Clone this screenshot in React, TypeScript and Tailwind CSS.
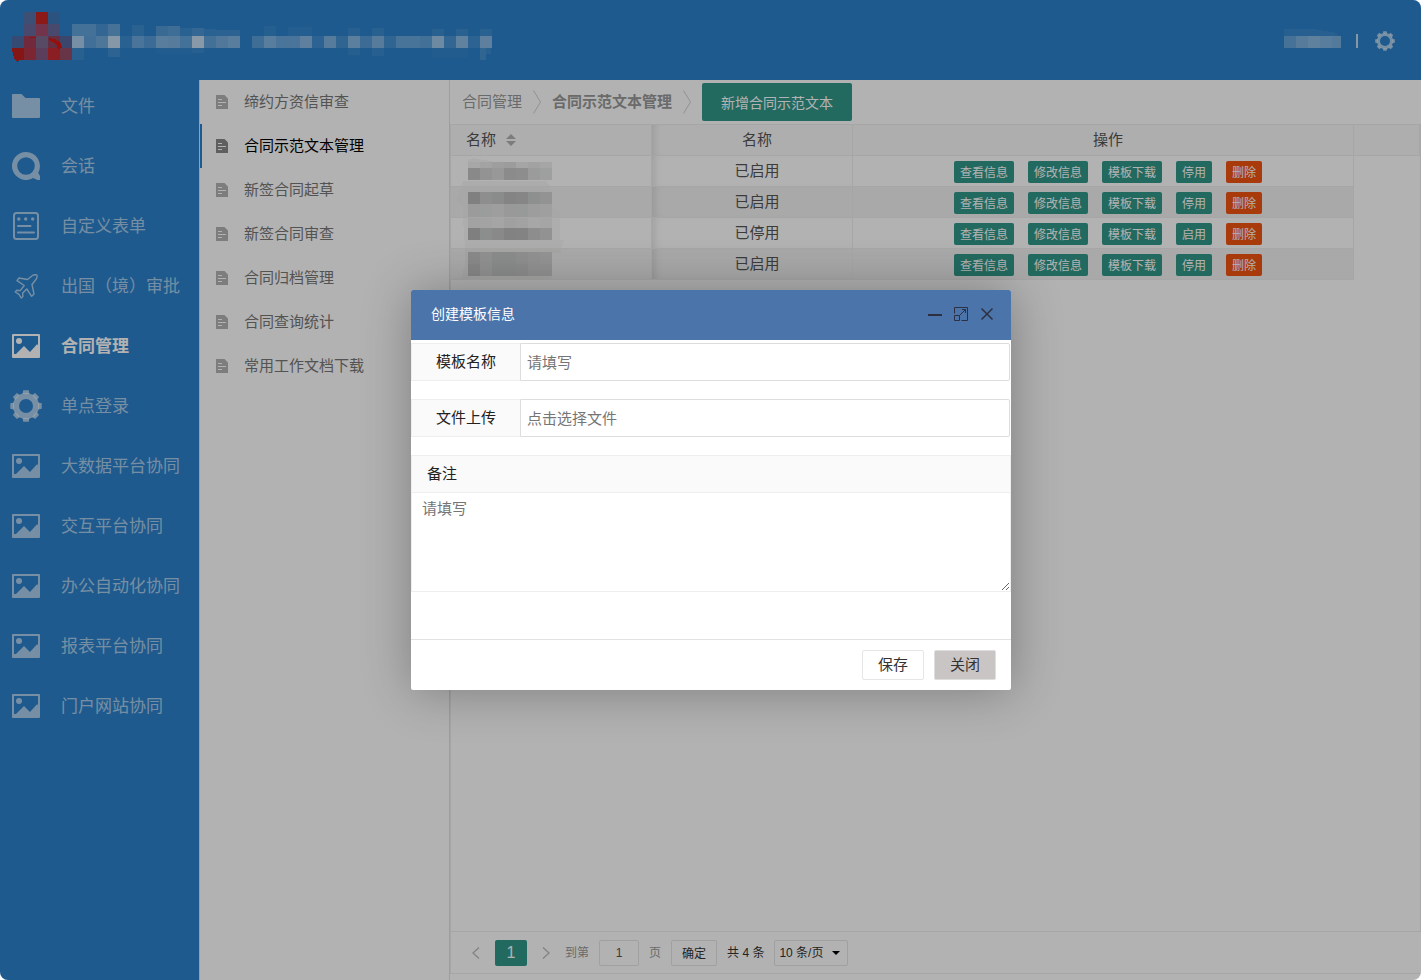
import React, { useState } from 'react'

type IconName = 'folder' | 'chat' | 'form' | 'plane' | 'image' | 'gear'

const NAV: { icon: IconName; label: string }[] = [
  { icon: 'folder', label: '文件' },
  { icon: 'chat', label: '会话' },
  { icon: 'form', label: '自定义表单' },
  { icon: 'plane', label: '出国（境）审批' },
  { icon: 'image', label: '合同管理' },
  { icon: 'gear', label: '单点登录' },
  { icon: 'image', label: '大数据平台协同' },
  { icon: 'image', label: '交互平台协同' },
  { icon: 'image', label: '办公自动化协同' },
  { icon: 'image', label: '报表平台协同' },
  { icon: 'image', label: '门户网站协同' },
]

const SUB_NAV = ['缔约方资信审查', '合同示范文本管理', '新签合同起草', '新签合同审查', '合同归档管理', '合同查询统计', '常用工作文档下载']

const ROWS = [
  { status: '已启用', toggle: '停用' },
  { status: '已启用', toggle: '停用' },
  { status: '已停用', toggle: '启用' },
  { status: '已启用', toggle: '停用' },
]

// Masked names: [y, height, shade of each 12px cell]
const MASKS: [number, number, string[]][][] = [
  [
    [6, 6, ['#efefef', '#eaeaea', '#e2e2e2', '#e0e0e0', '#ececec', '#e8e8e8', '#eeeeee']],
    [12, 12, ['#c4c4c4', '#d3d3d3', '#dadada', '#c8c8c8', '#cbcbcb', '#dedede', '#e3e5e4']],
  ],
  [
    [5, 12, ['#b8b8b8', '#cccccc', '#c6c8c7', '#bdbdbd', '#c0c0c0', '#cccecf', '#d3d3d3']],
    [17, 13, ['#dfdfdf', '#dde1df', '#e3e3e3', '#dcdcdc', '#dadcdb', '#e1e1e1', '#e4e4e4']],
  ],
  [
    [0, 10, ['#e9e9e9', '#eaeaea', '#ececec', '#e6e6e6', '#e9e9e9', '#efefef', '#ededed']],
    [10, 12, ['#b6b6b6', '#c9cbca', '#c4c4c4', '#bababa', '#bcbcbc', '#cbcbcb', '#d2d2d2']],
  ],
  [
    [3, 12, ['#c6c6c6', '#d0d0d0', '#c8cac9', '#c6cac8', '#cdcdcd', '#d2d2d2', '#d4d4d4']],
    [15, 12, ['#c2c2c2', '#d0d0d0', '#c6c8c7', '#c6c8c7', '#c9c9c9', '#d0d0d0', '#d0d0d0']],
  ],
]

// Light smudge around each masked name
const SMUDGES = [
  { d: 'M17 4L22 2l22 4 40 2v10H17zM12 25h82l6 5H10z', fill: '#f6f6f6' },
  { d: 'M10 0h88l3 5h-8v13l16 6v6H12V20l-7-6z', fill: '#f1f0ef' },
  { d: 'M12 0h97v22h4l-3 8H14z', fill: '#f8f8f8' },
  { d: 'M14 0h96v4h-12l2 26H10l4-14z', fill: '#ececeb' },
]

// [x, y, width, height, opacity] of the masked title in the header
const TITLE_CELLS: number[][] = [
  [72, 24, 24, 12, 0.26], [96, 24, 12, 12, 0.14], [108, 24, 12, 12, 0.28], [132, 25, 12, 11, 0.08],
  [156, 26, 12, 10, 0.18], [168, 26, 12, 10, 0.22], [180, 28, 12, 8, 0.08], [192, 28, 12, 8, 0.15],
  [204, 29, 12, 7, 0.08], [216, 30, 24, 6, 0.09],
  [72, 36, 12, 12, 0.6], [84, 36, 12, 12, 0.24], [96, 36, 12, 12, 0.32], [108, 36, 12, 12, 0.7],
  [120, 36, 12, 12, 0.08], [132, 36, 12, 12, 0.3], [144, 36, 12, 12, 0.2], [156, 36, 12, 12, 0.4],
  [168, 36, 12, 12, 0.38], [180, 36, 12, 12, 0.26], [192, 36, 12, 12, 0.72], [204, 36, 12, 12, 0.25],
  [216, 36, 12, 12, 0.34], [228, 36, 12, 12, 0.4], [252, 36, 12, 12, 0.22], [264, 36, 12, 12, 0.4],
  [276, 36, 24, 12, 0.3], [300, 36, 12, 12, 0.43], [312, 36, 12, 12, 0.1], [324, 36, 12, 12, 0.38],
  [336, 36, 12, 12, 0.12], [348, 36, 12, 12, 0.42], [360, 36, 12, 12, 0.2], [372, 36, 12, 12, 0.38],
  [384, 36, 12, 12, 0.12], [396, 36, 24, 12, 0.29], [420, 36, 12, 12, 0.25], [432, 36, 12, 12, 0.54],
  [444, 36, 12, 12, 0.14], [456, 36, 12, 12, 0.46], [468, 36, 12, 12, 0.1], [480, 36, 12, 12, 0.43],
  [72, 48, 12, 12, 0.07], [108, 48, 12, 9, 0.1], [156, 48, 36, 6, 0.03], [192, 48, 12, 5, 0.06],
  [264, 26, 12, 10, 0.05], [288, 27, 24, 9, 0.04], [348, 28, 12, 8, 0.06], [372, 28, 12, 8, 0.07],
  [432, 29, 12, 7, 0.07], [456, 29, 12, 7, 0.08], [480, 29, 12, 7, 0.08],
  [348, 48, 12, 7, 0.05], [372, 48, 12, 8, 0.06], [432, 48, 36, 10, 0.03], [480, 48, 6, 12, 0.12], [486, 48, 5, 6, 0.07],
]

const LOGO_CELLS: [number, number, string][] = [
  [24, 12, '#5672a6'], [36, 12, '#c82522'], [48, 12, '#4078b8'],
  [24, 24, '#68699d'], [36, 24, '#a34b6b'], [48, 24, '#68699d'],
  [12, 36, '#4d6ca6'], [24, 36, '#a23c57'], [36, 36, '#7c6a90'], [48, 36, '#92425d'], [60, 36, '#54659a'],
  [24, 48, '#b3374a'], [36, 48, '#835a85'], [48, 48, '#c82c32'], [60, 48, '#954d68'],
]

function Gear({ size, hole, body }: { size: number; hole: number; body: number }) {
  const mid = (hole + body) / 2
  return (
    <svg width={size} height={size} viewBox="0 0 32 32" fill="currentColor" aria-hidden="true">
      <circle cx="16" cy="16" r={mid} fill="none" stroke="currentColor" strokeWidth={body - hole} />
      {[0, 45, 90, 135, 180, 225, 270, 315].map((a) => (
        <path key={a} d={`M12.6 ${17 - body} L13.2 0.3 H18.8 L19.4 ${17 - body} Z`} transform={`rotate(${a} 16 16)`} />
      ))}
    </svg>
  )
}

function NavIcon({ name }: { name: IconName }) {
  if (name === 'gear') return <Gear size={32} hole={7} body={13} />
  return (
    <svg width="28" height="28" viewBox="0 0 28 28" fill="none" stroke="currentColor" aria-hidden="true">
      {name === 'folder' && (
        <path d="M1 2h8.5l4 4H27a1 1 0 0 1 1 1v18a1 1 0 0 1-1 1H1a1 1 0 0 1-1-1V3a1 1 0 0 1 1-1z" fill="currentColor" stroke="none" />
      )}
      {name === 'chat' && (
        <path
          d="M14 0a14 14 0 0 1 12.200 20.800L28 24v4h-2.500l-4.300-2A14 14 0 1 1 14 0zM14 5.200a8.800 8.800 0 1 0 0 17.600 8.800 8.800 0 0 0 0-17.600z"
          fill="currentColor"
          fillRule="evenodd"
          stroke="none"
        />
      )}
      {name === 'form' && (
        <>
          <rect x="2" y="1" width="24" height="26" rx="2.5" strokeWidth="2" />
          <path d="M6 14h12.500M6 20.500h16" strokeWidth="2" strokeLinecap="round" />
          <g fill="currentColor" stroke="none">
            <circle cx="6.800" cy="7" r="1.700" />
            <circle cx="13.700" cy="7" r="1.700" />
            <circle cx="20.700" cy="7" r="1.700" />
          </g>
        </>
      )}
      {name === 'plane' && (
        <path
          d="M15.500 7.500L20.500 3.500c1.400-1 3.900-.9 4.400-.4.500.6.200 2.900-.8 4.200L20 12.500l2 9.500-2.300 2.300-4.900-7.300-4.100 4.100.2 3.300-1.700 1.600L7 22.300 3.200 20l1.600-1.700 3.400.3 4-5.100-7.200-4.900L7 6z"
          strokeWidth="1.400"
          strokeLinejoin="round"
        />
      )}
      {name === 'image' && (
        <>
          <path fillRule="evenodd" stroke="none" fill="currentColor" d="M1 2h26a1 1 0 0 1 1 1v22a1 1 0 0 1-1 1H1a1 1 0 0 1-1-1V3a1 1 0 0 1 1-1zM2 4v18h2L12 14l6 6 7-7.700 1 .7V4z" />
          <circle cx="7" cy="9" r="3" fill="currentColor" stroke="none" />
        </>
      )}
    </svg>
  )
}

function DocIcon() {
  return (
    <svg width="12" height="14" viewBox="0 0 12 14" aria-hidden="true">
      <path d="M0 0h8.500L12 3.500V14H0z" fill="currentColor" />
      <path d="M2 4.500h4M2 7.500h8M2 10.500h4" stroke="#fff" strokeWidth="1" />
    </svg>
  )
}

function CrumbArrow() {
  return (
    <svg width="8" height="24" viewBox="0 0 8 24" fill="none" stroke="#d2d2d2" aria-hidden="true">
      <path d="M.5.5L7.500 12 .5 23.500" />
    </svg>
  )
}

function PageArrow({ next }: { next?: boolean }) {
  return (
    <svg width="8" height="12" viewBox="0 0 8 12" fill="none" stroke="currentColor" strokeWidth="1.300" aria-hidden="true">
      <path d={next ? 'M1 .5L7 6l-6 5.500' : 'M7 .5L1 6l6 5.500'} />
    </svg>
  )
}

function Header() {
  return (
    <header className="flex h-20 items-center justify-between bg-[#2c82cc] pr-[26px]">
      <svg width="500" height="80" viewBox="0 0 500 80" shapeRendering="crispEdges" role="img" aria-label="logo">
        {LOGO_CELLS.map(([x, y, fill]) => <rect key={`${x}-${y}`} x={x} y={y} width="12" height="12" fill={fill} />)}
        <path d="M12 48h12v12h-4l-3 2-3-4-1-5-1-1z" fill="#bd2020" />
        <path d="M49 38l6 1 6 4 1 5-4 1-1-3-4-4-5-3zM30 37h6v1h-6z" fill="#d41812" />
        {TITLE_CELLS.map(([x, y, w, h, o]) => (
          <rect key={`${x}-${y}`} x={x} y={y} width={w} height={h} fill="#fff" fillOpacity={o} />
        ))}
      </svg>
      <div className="flex items-center pt-0.5 text-white">
        <svg width="57" height="26" viewBox="0 0 57 26" fill="#fff" shapeRendering="crispEdges" role="img" aria-label="user">
          <path d="M0 1h29l12 2 12 2 1 3H0z" fillOpacity="0.060" />
          <path d="M0 8h12v12H0z" fillOpacity="0.280" />
          <path d="M12 8h12v12H12z" fillOpacity="0.380" />
          <path d="M24 8h12v12H24z" fillOpacity="0.440" />
          <path d="M36 8h12v12H36z" fillOpacity="0.400" />
          <path d="M48 8h9v12h-9z" fillOpacity="0.360" />
        </svg>
        <span className="mr-[17px] ml-[15px] h-3.5 w-0.5 bg-white/70" />
        <button type="button" aria-label="设置" className="text-white/60">
          <Gear size={20} hole={8} body={13} />
        </button>
      </div>
    </header>
  )
}

function OpButton({ children, danger }: { children: React.ReactNode; danger?: boolean }) {
  return (
    <button type="button" className={`h-[22px] rounded-xs px-1.5 pt-0.5 text-[12px] leading-5 text-white ${danger ? 'bg-[#f35312]' : 'bg-[#319889]'}`}>
      {children}
    </button>
  )
}

function TemplateTable() {
  const th = 'h-[31px] border-r border-b border-[#eee] bg-[#fafafa] font-normal'
  const edge = 'shadow-[inset_8px_0_8px_-6px_rgba(0,0,0,0.12)]'
  return (
    <table className="w-full table-fixed border-separate border-spacing-0 text-[15px] leading-5 text-[#555]">
      <colgroup>
        <col className="w-[201px]" />
        <col className="w-[201px]" />
        <col className="w-[501px]" />
        <col />
      </colgroup>
      <thead>
        <tr>
          <th className={`${th} pl-[15px] text-left`}>
            <span className="inline-flex items-center gap-2.5">
              名称
              <svg width="10" height="12" viewBox="0 0 10 12" fill="#b2b2b2" aria-hidden="true">
                <path d="M5 0l5 5H0zM5 12L0 7h10z" />
              </svg>
            </span>
          </th>
          <th className={`${th} ${edge} pl-2.5`}>名称</th>
          <th className={`${th} pl-2.5`}>操作</th>
          <th className={th} />
        </tr>
      </thead>
      <tbody>
        {ROWS.map((row, i) => {
          const td = `h-[31px] border-r border-b border-[#eee] p-0 ${i % 2 ? 'bg-[#f2f2f2]' : 'bg-white'}`
          return (
            <tr key={i}>
              <td className={td}>
                <svg className="block" width="120" height="30" viewBox="0 0 120 30" shapeRendering="crispEdges" aria-hidden="true">
                  <path d={SMUDGES[i].d} fill={SMUDGES[i].fill} />
                  {MASKS[i].map(([y, h, cells]) =>
                    cells.map((c, k) => <rect key={`${y}-${k}`} x={17 + k * 12} y={y} width="12" height={h} fill={c} />)
                  )}
                </svg>
              </td>
              <td className={`${td} ${edge} text-center`}><span className="pl-2.5">{row.status}</span></td>
              <td className={td}>
                <div className="flex items-center justify-center gap-3.5 pt-0.5 pl-2.5">
                  <OpButton>查看信息</OpButton>
                  <OpButton>修改信息</OpButton>
                  <OpButton>模板下载</OpButton>
                  <OpButton>{row.toggle}</OpButton>
                  <OpButton danger>删除</OpButton>
                </div>
              </td>
              <td />
            </tr>
          )
        })}
      </tbody>
    </table>
  )
}

function Pagination() {
  return (
    <div className="flex h-[43px] items-center border-y border-[#eee] pl-[21px] text-[12px] text-[#333]">
      <button type="button" aria-label="上一页" className="text-[#bbb]"><PageArrow /></button>
      <button type="button" className="mx-[15px] h-[26px] w-8 rounded-xs bg-[#319889] font-['Liberation_Sans'] text-[16px] text-white">1</button>
      <button type="button" aria-label="下一页" className="text-[#bbb]"><PageArrow next /></button>
      <label className="ml-[15px] flex items-center gap-2.5 text-[#999]">
        到第
        <input defaultValue="1" className="h-[26px] w-10 rounded-xs border border-[#e6e6e6] bg-white text-center text-[#555]" />
        页
      </label>
      <button type="button" className="mx-2.5 h-[26px] rounded-xs border border-[#e6e6e6] px-2.5 pt-0.5">确定</button>
      <span>共 4 条</span>
      <span className="relative ml-2.5">
        <select aria-label="每页条数" className="h-[26px] w-[74px] appearance-none rounded-xs border border-[#e6e6e6] bg-white pl-1">
          <option>10 条/页</option>
        </select>
        <svg className="pointer-events-none absolute top-[11px] right-2" width="8" height="4" viewBox="0 0 8 4" aria-hidden="true">
          <path d="M0 0h8L4 4z" fill="#000" />
        </svg>
      </span>
    </div>
  )
}

function TemplateDialog() {
  const label = 'border border-[#eee] bg-[#fafafa]'
  const field = 'h-[38px] min-w-0 flex-1 rounded-r-xs border border-[#ddd] px-1.5 outline-none placeholder:text-[#757575]'
  return (
    <div role="dialog" aria-label="创建模板信息" className="flex h-[400px] w-[600px] flex-col rounded-xs bg-white text-[15px] text-[#222] shadow-[1px_1px_50px_rgba(0,0,0,0.3)]">
      <div className="flex h-[50px] items-center justify-between rounded-t-xs bg-[#4b75aa] pr-[17px] pb-0.5 pl-5 text-[#2d3040]">
        <h2 className="text-[14px] text-white">创建模板信息</h2>
        <div className="flex items-center gap-3">
          <button type="button" aria-label="最小化">
            <svg width="14" height="14" viewBox="0 0 14 14"><path d="M0 8h14" stroke="currentColor" strokeWidth="2" /></svg>
          </button>
          <button type="button" aria-label="最大化">
            <svg width="14" height="14" viewBox="0 0 14 14" fill="none" stroke="currentColor">
              <path d="M.5 6.500V.5h13v13h-6M.5 8.500h5v5h-5zM5.500 8.500l6-6M8 2.500h3.500V6" />
            </svg>
          </button>
          <button type="button" aria-label="关闭窗口">
            <svg width="14" height="14" viewBox="0 0 14 14" stroke="currentColor" strokeWidth="1.500"><path d="M1.500 1.500l11 11M12.500 1.500l-11 11" /></svg>
          </button>
        </div>
      </div>
      <form className="flex flex-1 flex-col pt-[3px]" onSubmit={(e) => e.preventDefault()}>
        <div className="mb-[18px] flex pr-px">
          <label htmlFor="tpl-name" className={`${label} w-[109px] border-r-0 text-center leading-9`}>模板名称</label>
          <input id="tpl-name" placeholder="请填写" className={field} />
        </div>
        <div className="mb-[18px] flex pr-px">
          <label htmlFor="tpl-file" className={`${label} w-[109px] border-r-0 text-center leading-9`}>文件上传</label>
          <input id="tpl-file" placeholder="点击选择文件" readOnly className={field} />
        </div>
        <label htmlFor="tpl-note" className={`${label} block px-[15px] leading-9`}>备注</label>
        <textarea id="tpl-note" placeholder="请填写" className="-mt-px h-[100px] resize border border-[#eee] px-2.5 py-1.5 leading-5 outline-none placeholder:text-[#757575]" />
        <div className="mt-auto flex h-[51px] items-center justify-end gap-2.5 border-t border-[#e2e2e2] pr-[15px] text-[#333]">
          <button type="submit" className="h-[30px] w-[62px] rounded-xs border border-[#e6e6e6] bg-white">保存</button>
          <button type="button" className="h-[30px] w-[62px] rounded-xs border border-[#dedede] bg-[#c9c5c5]">关闭</button>
        </div>
      </form>
    </div>
  )
}

export default function App() {
  const [active, setActive] = useState('合同管理')
  const [activeSub, setActiveSub] = useState('合同示范文本管理')

  return (
    <div className="relative flex min-h-screen flex-col overflow-hidden rounded-lg bg-white font-['Liberation_Sans','Noto_Sans_CJK_SC',sans-serif]">
      <Header />
      <div className="flex flex-1">
        <nav className="flex w-[200px] shrink-0 flex-col gap-2 border-r border-[#dde6ee] bg-[#2c82cc]">
          {NAV.map((n) => (
            <a
              key={n.label}
              href="#"
              onClick={() => setActive(n.label)}
              className={`flex h-[52px] items-center text-[17px] ${n.label === active ? 'font-bold text-white' : 'text-white/60'}`}
            >
              <span className="mr-[9px] flex w-[52px] shrink-0 justify-center">
                <NavIcon name={n.icon} />
              </span>
              <span className="pt-0.5 whitespace-nowrap">{n.label}</span>
            </a>
          ))}
        </nav>

        <nav className="w-[250px] shrink-0 border-r border-[#e2e2e2]">
          {SUB_NAV.map((s) => (
            <a
              key={s}
              href="#"
              onClick={() => setActiveSub(s)}
              className={`flex h-11 items-center gap-4 border-l-2 pl-3.5 text-[15px] ${
                s === activeSub ? 'border-[#2c82cc] text-black' : 'border-transparent text-[#777]'
              }`}
            >
              <span className={s === activeSub ? 'text-[#888]' : 'text-[#b4b4b4]'}><DocIcon /></span>
              {s}
            </a>
          ))}
        </nav>

        <main className="flex min-w-0 flex-1 flex-col pb-1.5">
          <div className="flex h-11 items-center gap-[11px] pl-3 text-[15px] text-[#999]">
            <a href="#">合同管理</a>
            <CrumbArrow />
            <span className="font-bold">合同示范文本管理</span>
            <CrumbArrow />
            <button type="button" className="h-[38px] w-[150px] rounded-xs bg-[#319889] pt-0.5 text-[14px] text-white">新增合同示范文本</button>
          </div>
          <div className="flex flex-1 flex-col border-t border-l border-[#eee]">
            <div className="flex-1 border-r border-[#eee]"><TemplateTable /></div>
            <Pagination />
          </div>
        </main>
      </div>

      <div className="absolute inset-0 flex items-center justify-center bg-black/30 pl-px">
        <TemplateDialog />
      </div>
    </div>
  )
}
